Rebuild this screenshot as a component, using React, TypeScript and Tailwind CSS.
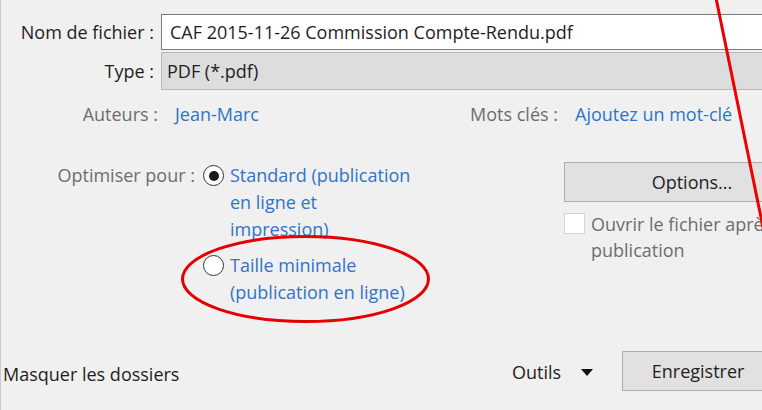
import React from "react";

const font = { fontFamily: '"Open Sans", "Noto Sans", sans-serif' };

function Radio({ checked }: { checked?: boolean }) {
  return (
    <div className="mt-[3px] flex h-[21px] w-[21px] shrink-0 items-center justify-center rounded-full border border-[#333333] bg-white">
      {checked && <div className="h-[10px] w-[10px] rounded-full bg-[#1a1a1a]" />}
    </div>
  );
}

export default function App() {
  return (
    <div
      className="relative flex h-[410px] w-[762px] flex-col overflow-hidden border-l border-[#c9c9c9] bg-[#f0f0f0] text-[18px] text-[#1e1e1e]"
      style={font}
    >
      {/* File name */}
      <div className="mt-[14px] flex h-[36px] shrink-0 items-center">
        <div className="w-[153px] shrink-0 text-right">Nom de fichier :</div>
        <div className="ml-[7px] flex h-full flex-1 items-center whitespace-nowrap border border-r-0 border-[#7a7a7a] bg-white pl-[8px]">
          CAF 2015-11-26 Commission Compte-Rendu.pdf
        </div>
      </div>
      {/* Type */}
      <div className="mt-[2px] flex h-[38px] shrink-0 items-center">
        <div className="w-[153px] shrink-0 text-right">Type :</div>
        <div className="ml-[7px] flex h-full flex-1 items-center border border-r-0 border-[#b9b9b9] bg-[#dddddd] pl-[5px]">
          PDF (*.pdf)
        </div>
      </div>
      {/* Authors / keywords */}
      <div className="mt-[11px] flex h-[26px] shrink-0 items-center">
        <div className="w-[157px] shrink-0 text-right text-[#6d6d6d]">Auteurs :</div>
        <div className="ml-[17px] w-[295px] shrink-0 text-[#2f74c9]">Jean-Marc</div>
        <div className="w-[88px] shrink-0 whitespace-nowrap text-right text-[#6d6d6d]">Mots clés :</div>
        <div className="ml-[17px] shrink-0 whitespace-nowrap text-[#2f74c9]">Ajoutez un mot-clé</div>
      </div>
      {/* Optimise + options */}
      <div className="mt-[35px] flex shrink-0">
        <div className="w-[194px] shrink-0 whitespace-nowrap text-right leading-[27px] text-[#6d6d6d]">Optimiser pour :</div>
        <div className="ml-[8px] flex w-[220px] shrink-0 flex-col">
          <div className="flex gap-[6px]">
            <Radio checked />
            <div className="whitespace-nowrap leading-[27px] text-[#2f74c9]">
              Standard (publication
              <br />
              en ligne et
              <br />
              impression)
            </div>
          </div>
          <div className="mt-[9px] flex gap-[6px]">
            <Radio />
            <div className="whitespace-nowrap leading-[27px] text-[#2f74c9]">
              Taille minimale
              <br />
              (publication en ligne)
            </div>
          </div>
        </div>
        <div className="ml-[141px] flex shrink-0 flex-col">
          <div className="flex h-[40px] w-[256px] items-center justify-center border border-[#adadad] bg-[#e1e1e1]">
            Options...
          </div>
          <div className="mt-[9px] flex gap-[6px]">
            <div className="mt-[2px] h-[21px] w-[21px] shrink-0 border border-[#d4d4d4] bg-white" />
            <div className="whitespace-nowrap leading-[26px] text-[#6d6d6d]">
              Ouvrir le fichier après
              <br />
              publication
            </div>
          </div>
        </div>
      </div>
      {/* Bottom bar */}
      <div className="mt-[45px] flex h-[40px] shrink-0 items-center">
        <div className="ml-[2px] mt-[6px] w-[508px] shrink-0 whitespace-nowrap">Masquer les dossiers</div>
        <div className="ml-[1px] mt-[2px] flex shrink-0 items-center">
          <span>Outils</span>
          <svg className="ml-[20px]" width="12" height="7" viewBox="0 0 12 7">
            <path d="M0 0 H12 L6 7 Z" fill="#111" />
          </svg>
        </div>
        <div className="ml-[29px] flex h-[40px] w-[152px] shrink-0 items-center justify-center border border-[#adadad] bg-[#e1e1e1]">
          Enregistrer
        </div>
      </div>

      {/* Red annotations */}
      <svg className="pointer-events-none absolute left-0 top-0" width="762" height="410" viewBox="0 0 762 410">
        <ellipse cx="304.5" cy="279" rx="123" ry="42.5" fill="none" stroke="#e30000" strokeWidth="3" />
        <line x1="715" y1="-2" x2="763" y2="232" stroke="#ee0000" strokeWidth="3" />
      </svg>
    </div>
  );
}
